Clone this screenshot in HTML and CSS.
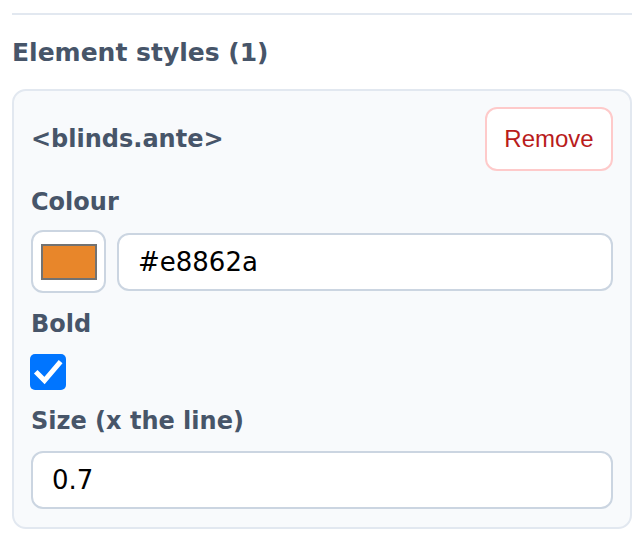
FILE: index.html
```html
<!DOCTYPE html>
<html>
<head>
  <title>Element styles</title>
  <link rel="stylesheet" href="styles.css">
</head>
<body>
  <div class="panel">
    <hr class="divider">
    <h2 class="section-title">Element styles (1)</h2>

    <div class="style-card">
      <div class="card-head">
        <span class="element-name">&lt;blinds.ante&gt;</span>
        <button class="remove-btn" type="button">Remove</button>
      </div>

      <div class="field">
        <label class="field-label">Colour</label>
        <div class="colour-row">
          <button class="swatch-btn" type="button"><span class="swatch"></span></button>
          <input class="text-input" type="text" value="#e8862a">
        </div>
      </div>

      <div class="field">
        <label class="field-label">Bold</label>
        <span class="checkbox">
          <svg width="36" height="36" viewBox="0 0 36 36">
            <path d="M7.5 19.5 L14.5 26.5 L29 9.5" fill="none" stroke="#fff" stroke-width="5" stroke-linecap="square"/>
          </svg>
        </span>
      </div>

      <div class="field">
        <label class="field-label">Size (x the line)</label>
        <input class="text-input" type="text" value="0.7">
      </div>
    </div>
  </div>
</body>
</html>
```

FILE: styles.css
```css
body {
  margin: 0;
  background: #fff;
  font-family: "DejaVu Sans", sans-serif;
  color: #475569;
}

.panel {
  padding: 0 12px;
}

.divider {
  border: 0;
  border-top: 2px solid #e2e8f0;
  margin: 13px 0 0;
}

.section-title {
  font-size: 25px;
  font-weight: bold;
  line-height: 28px;
  margin: 24px 0 22px;
}

.style-card {
  background: #f8fafc;
  border: 2px solid #e2e8f0;
  border-radius: 14px;
  padding: 16px 17px 18px 17px;
}

.card-head {
  display: flex;
  align-items: center;
  justify-content: space-between;
  margin-bottom: 5px;
}

.element-name {
  font-size: 24px;
  font-weight: bold;
}

.remove-btn {
  font-family: "Liberation Sans", Arial, sans-serif;
  font-size: 24px;
  color: #b91c1c;
  background: #fff;
  border: 2px solid #fecaca;
  border-radius: 12px;
  height: 64px;
  width: 128px;
  padding: 0;
}

.field {
  margin-top: 17px;
}

.field-label {
  display: block;
  font-size: 24px;
  font-weight: bold;
  line-height: 28px;
  margin-bottom: 14px;
}

.field:last-child .field-label {
  margin-bottom: 16px;
}

.colour-row {
  display: flex;
  align-items: center;
  gap: 11px;
}

.swatch-btn {
  width: 75px;
  height: 63px;
  background: #fff;
  border: 2px solid #cbd5e1;
  border-radius: 12px;
  padding: 0;
  display: flex;
  align-items: center;
  justify-content: center;
  flex-shrink: 0;
}

.swatch {
  display: block;
  width: 56px;
  height: 36px;
  box-sizing: border-box;
  background: #e8862a;
  border: 2px solid #727272;
}

.text-input {
  display: block;
  box-sizing: border-box;
  width: 100%;
  height: 58px;
  border: 2px solid #cbd5e1;
  border-radius: 12px;
  background: #fff;
  padding: 0 19px;
  font-family: "DejaVu Sans", sans-serif;
  font-size: 26px;
  color: #000;
}

.checkbox {
  display: block;
  width: 36px;
  height: 36px;
  margin-top: 16px;
  margin-left: -1px;
  border-radius: 5px;
  background: #0075ff;
}

.checkbox svg {
  display: block;
}
```
